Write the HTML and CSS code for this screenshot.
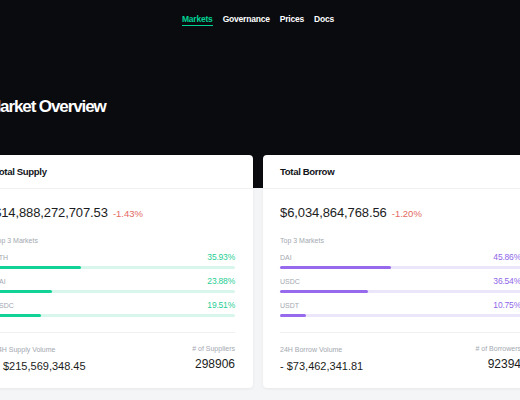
FILE: index.html
```html
<!DOCTYPE html>
<html lang="en">
<head>
<meta charset="utf-8">
<title>Market Overview</title>
<link rel="stylesheet" href="styles.css">
</head>
<body>
<div class="page">
  <div class="container">
    <nav class="nav">
      <a class="nav-link active">Markets</a>
      <a class="nav-link">Governance</a>
      <a class="nav-link">Prices</a>
      <a class="nav-link">Docs</a>
    </nav>
    <h1 class="title">Market Overview</h1>
    <div class="cards">
      <section class="card supply">
        <header class="card-head">Total Supply</header>
        <div class="card-body">
          <div class="total"><span class="amount">$14,888,272,707.53</span><span class="change">-1.43%</span></div>
          <div class="caption">Top 3 Markets</div>
          <div class="market">
            <div class="market-row"><span class="sym">ETH</span><span class="pct">35.93%</span></div>
            <div class="track"><div class="fill" style="width:35.93%"></div></div>
          </div>
          <div class="market">
            <div class="market-row"><span class="sym">DAI</span><span class="pct">23.88%</span></div>
            <div class="track"><div class="fill" style="width:23.88%"></div></div>
          </div>
          <div class="market">
            <div class="market-row"><span class="sym">USDC</span><span class="pct">19.51%</span></div>
            <div class="track"><div class="fill" style="width:19.51%"></div></div>
          </div>
        </div>
        <div class="card-foot">
          <div class="stat">
            <div class="stat-label">24H Supply Volume</div>
            <div class="stat-value indent">$215,569,348.45</div>
          </div>
          <div class="stat right">
            <div class="stat-label">#&nbsp;of Suppliers</div>
            <div class="stat-count">298906</div>
          </div>
        </div>
      </section>
      <section class="card borrow">
        <header class="card-head">Total Borrow</header>
        <div class="card-body">
          <div class="total"><span class="amount">$6,034,864,768.56</span><span class="change">-1.20%</span></div>
          <div class="caption">Top 3 Markets</div>
          <div class="market">
            <div class="market-row"><span class="sym">DAI</span><span class="pct">45.86%</span></div>
            <div class="track"><div class="fill" style="width:45.86%"></div></div>
          </div>
          <div class="market">
            <div class="market-row"><span class="sym">USDC</span><span class="pct">36.54%</span></div>
            <div class="track"><div class="fill" style="width:36.54%"></div></div>
          </div>
          <div class="market">
            <div class="market-row"><span class="sym">USDT</span><span class="pct">10.75%</span></div>
            <div class="track"><div class="fill" style="width:10.75%"></div></div>
          </div>
        </div>
        <div class="card-foot">
          <div class="stat">
            <div class="stat-label">24H Borrow Volume</div>
            <div class="stat-value">- $73,462,341.81</div>
          </div>
          <div class="stat right">
            <div class="stat-label">#&nbsp;of Borrowers</div>
            <div class="stat-count">92394</div>
          </div>
        </div>
      </section>
    </div>
  </div>
</div>
</body>
</html>
```
FILE: styles.css
```css
html, body {
  margin: 0;
  padding: 0;
  overflow: hidden;
}
body {
  font-family: "Liberation Sans", Arial, sans-serif;
  background: #f4f5f7;
  width: 520px;
  height: 400px;
}
.page {
  background: linear-gradient(#0a0b0f 0, #0a0b0f 188px, #f4f5f7 188px);
  height: 400px;
  padding-right: 4px;
  box-sizing: border-box;
}
.container {
  width: 562px;
  margin-left: calc(50% - 281px);
  display: flex;
  flex-direction: column;
}
.nav {
  display: flex;
  justify-content: center;
  gap: 10px;
  padding-top: 14px;
  height: 20px;
}
.nav-link {
  color: #ffffff;
  font-weight: 700;
  font-size: 8.5px;
  letter-spacing: -0.2px;
  line-height: 10px;
  height: 12px;
  box-sizing: border-box;
}
.nav-link.active {
  color: #00d395;
  border-bottom: 1.5px solid #00d395;
}
.title {
  margin: 63px 0 0 10px;
  color: #ffffff;
  font-size: 17px;
  font-weight: 700;
  letter-spacing: -1.1px;
  line-height: 20px;
  height: 20px;
}
.cards {
  margin-top: 38px;
  display: flex;
  gap: 10px;
}
.card {
  flex: 1;
  background: #ffffff;
  border-radius: 4px;
  box-shadow: 0 1px 3px rgba(0, 0, 0, 0.06);
  height: 233px;
  padding: 0 18px 0 17px;
  display: flex;
  flex-direction: column;
}
.card-head {
  height: 33px;
  line-height: 34px;
  font-size: 9.6px;
  font-weight: 700;
  letter-spacing: -0.35px;
  color: #111318;
  border-bottom: 1px solid #f0f1f3;
  margin: 0 -18px 0 -17px;
  padding-left: 17px;
}
.card-body {
  padding-bottom: 15px;
  border-bottom: 1px solid #eef0f2;
}
.total {
  margin-top: 16px;
  display: flex;
  align-items: baseline;
  gap: 5px;
  height: 16px;
}
.amount {
  font-size: 13px;
  letter-spacing: -0.1px;
  color: #1b1d22;
}
.change {
  font-size: 9.5px;
  color: #e46a62;
}
.caption {
  margin-top: 15px;
  font-size: 7px;
  color: #a3a8b0;
  height: 9px;
  line-height: 9px;
}
.market {
  margin-top: 8px;
  display: flex;
  flex-direction: column;
  gap: 4px;
}
.market + .market {
  margin-top: 8px;
}
.market-row {
  display: flex;
  justify-content: space-between;
  align-items: baseline;
  height: 9px;
  line-height: 9px;
}
.sym {
  font-size: 7px;
  color: #a3a8b0;
}
.pct {
  font-size: 8.5px;
  letter-spacing: -0.2px;
}
.supply .pct { color: #1fce94; }
.borrow .pct { color: #8f67e8; }
.track {
  height: 3px;
  border-radius: 2px;
}
.fill {
  height: 100%;
  border-radius: 2px;
}
.supply .track { background: #d8f6ec; }
.supply .fill { background: #12d296; }
.borrow .track { background: #ece6fb; }
.borrow .fill { background: #9669ed; }
.card-foot {
  display: flex;
  justify-content: space-between;
  padding-top: 12px;
}
.stat-label {
  font-size: 7px;
  color: #a3a8b0;
  line-height: 9px;
}
.stat-value {
  margin-top: 6px;
  font-size: 11px;
  color: #1b1d22;
}
.stat-value.indent {
  padding-left: 9px;
}
.stat.right {
  text-align: right;
}
.stat.right .stat-label {
  margin-top: -1px;
}
.stat-count {
  margin-top: 4px;
  font-size: 12px;
  color: #1b1d22;
}
```
